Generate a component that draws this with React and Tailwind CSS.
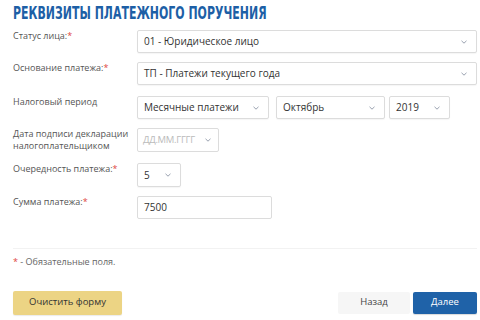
import React from 'react';

const Chevron = () => (
  <svg className="h-[6px] w-[8px] shrink-0 text-gray-400" viewBox="0 0 8 6" fill="none">
    <path d="M1.5 1.8 4 4.2 6.5 1.8" stroke="currentColor" strokeWidth="1" />
  </svg>
);

const Select = ({ value, className = '', muted = false }) => (
  <div
    className={`flex h-[23px] items-center justify-between rounded-[2px] border border-[#dcdcdc] bg-white pl-[6px] pr-[8px] text-[10px] shadow-[0_1px_1px_rgba(0,0,0,0.04)] ${
      muted ? 'text-[#bbbbbb]' : 'text-[#333]'
    } ${className}`}
  >
    <span className="whitespace-nowrap">{value}</span>
    <Chevron />
  </div>
);

const Label = ({ children, required }) => (
  <div className="w-[124px] shrink-0 text-[9px] leading-[12px] text-[#555]">
    {children}
    {required && <span className="text-[#e0463e]">*</span>}
  </div>
);

export default function App() {
  return (
    <div
      className="h-[320px] w-[480px] overflow-hidden bg-white"
      style={{ fontFamily: '"Open Sans", "Liberation Sans", sans-serif' }}
    >
      <h1 className="pl-[13px] pt-[3px] text-[17px] font-bold leading-[20px] text-[#1d5fa6]">
        <span
          className="inline-block origin-left scale-x-[0.645] whitespace-nowrap"
          style={{ fontFamily: '"DejaVu Sans", sans-serif' }}
        >
          РЕКВИЗИТЫ ПЛАТЕЖНОГО ПОРУЧЕНИЯ
        </span>
      </h1>

      <div className="pl-[13px] pr-[3px]">
        <div className="mt-[7px] flex items-start">
          <Label required>Статус лица:</Label>
          <Select value="01 - Юридическое лицо" className="flex-1" />
        </div>

        <div className="mt-[9px] flex items-start">
          <Label required>Основание платежа:</Label>
          <Select value="ТП - Платежи текущего года" className="flex-1" />
        </div>

        <div className="mt-[11px] flex items-start">
          <Label>Налоговый период</Label>
          <div className="flex gap-[4px]">
            <Select value="Месячные платежи" className="w-[132px]" />
            <Select value="Октябрь" className="ml-[3px] w-[109px]" />
            <Select value="2019" className="w-[61px]" />
          </div>
        </div>

        <div className="mt-[9px] flex items-start">
          <Label>
            Дата подписи декларации
            <br />
            налогоплательщиком
          </Label>
          <div className="flex h-[24px] w-[82px] items-center justify-between rounded-[2px] border border-[#dcdcdc] bg-white pl-[5px] pr-[6px] text-[9.5px] tracking-[-0.3px] text-[#bbbbbb]">
            <span className="whitespace-nowrap">ДД.ММ.ГГГГ</span>
            <Chevron />
          </div>
        </div>

        <div className="mt-[11px] flex items-start">
          <Label required>Очередность платежа:</Label>
          <Select value="5" className="h-[24px] w-[44px]" />
        </div>

        <div className="mt-[9px] flex items-start">
          <Label required>Сумма платежа:</Label>
          <div className="flex h-[23px] w-[135px] items-center rounded-[2px] border border-[#dcdcdc] bg-white pl-[6px] text-[10px] text-[#333]">
            7500
          </div>
        </div>

        <div className="mt-[29px] border-t border-[#f2f2f2]" />

        <div className="mt-[6px] text-[9px] text-[#666]">
          <span className="text-[#e0463e]">*</span> - Обязательные поля.
        </div>

        <div className="mt-[22px] flex items-center justify-between">
          <button className="h-[24px] w-[109px] rounded-[2px] bg-[#ecd484] text-[9.5px] text-[#333] shadow-[0_1px_1px_rgba(0,0,0,0.08)]">
            Очистить форму
          </button>
          <div className="flex items-center gap-[3px]">
            <button className="h-[22px] w-[72px] rounded-[2px] bg-[#f6f6f6] text-[9.5px] text-[#444]">
              Назад
            </button>
            <button className="h-[22px] w-[64px] rounded-[2px] bg-[#1f62a8] text-[9.5px] text-white shadow-[0_1px_1px_rgba(0,0,0,0.15)]">
              Далее
            </button>
          </div>
        </div>
      </div>
    </div>
  );
}
